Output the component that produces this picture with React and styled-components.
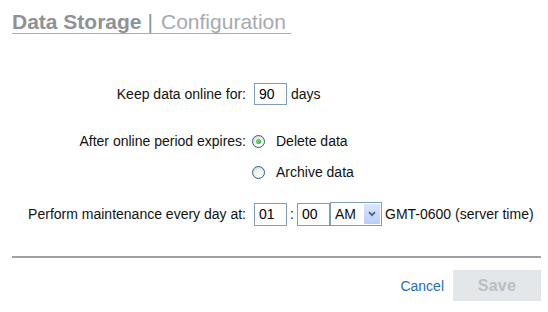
import React from 'react';
import styled, { createGlobalStyle } from 'styled-components';

const GlobalStyle = createGlobalStyle`
  html, body {
    margin: 0;
    padding: 0;
    background: #fff;
  }
  body {
    font-family: "Liberation Sans", Arial, sans-serif;
    font-size: 14px;
    color: #111;
  }
`;

const Page = styled.div`
  width: 548px;
  height: 312px;
  overflow: hidden;
`;

const Header = styled.div`
  padding: 11px 0 0 12px;
`;

const Title = styled.h1`
  display: inline-block;
  margin: 0;
  font-size: 21px;
  line-height: 22px;
  font-weight: normal;
  color: #a6aaae;
  border-bottom: 1px solid #a9adb1;
  padding-right: 5px;
`;

const TitleStrong = styled.span`
  font-weight: bold;
  color: #8d9296;
`;

const Sep = styled.span`
  color: #8d9296;
  margin: 0 8px 0 6px;
`;

const Form = styled.div`
  margin-top: 49px;
  display: flex;
  flex-direction: column;
`;

const Row = styled.div`
  display: grid;
  grid-template-columns: 246px 1fr;
  column-gap: 8px;
  align-items: start;
  margin-top: ${({ $mt }) => $mt || 0}px;
`;

const Label = styled.div`
  text-align: right;
  white-space: nowrap;
  line-height: ${({ $h }) => $h || 22}px;
`;

const Controls = styled.div`
  display: flex;
  align-items: center;
  height: ${({ $h }) => $h || 22}px;
  white-space: nowrap;
`;

const TextBox = styled.input`
  box-sizing: border-box;
  width: ${({ $w }) => $w || 33}px;
  height: ${({ $h }) => $h || 22}px;
  margin: 0;
  padding: 0 0 0 4px;
  border: 1px solid #7f9db9;
  border-radius: 0;
  font: 14px "Liberation Sans", Arial, sans-serif;
  color: #000;
  outline: none;
`;

const Unit = styled.span`
  margin-left: ${({ $ml }) => $ml || 4}px;
`;

const Colon = styled.span`
  width: 10px;
  text-align: center;
`;

const RadioGroup = styled.div`
  display: flex;
  flex-direction: column;
  gap: 9px;
`;

const RadioOption = styled.label`
  display: flex;
  align-items: center;
  height: 22px;
  gap: 11px;
  cursor: pointer;
`;

const RadioDot = styled.span`
  box-sizing: border-box;
  width: 13px;
  height: 13px;
  margin-left: -2px;
  border-radius: 50%;
  border: 1px solid #2d5d8c;
  background: radial-gradient(circle at 65% 70%, #ffffff 0%, #f2f2ee 40%, #d6d6ce 100%);
  display: flex;
  align-items: center;
  justify-content: center;

  &::after {
    content: '';
    width: 5px;
    height: 5px;
    border-radius: 50%;
    background: ${({ $on }) => ($on ? 'radial-gradient(circle at 35% 35%, #7fdc7f, #21a121)' : 'transparent')};
  }
`;

const Select = styled.div`
  box-sizing: border-box;
  width: 52px;
  height: 24px;
  padding: 1px;
  border: 1px solid #7f9db9;
  background: #fff;
  display: flex;
  align-items: stretch;
  justify-content: space-between;
`;

const SelectValue = styled.span`
  padding-left: 3px;
  line-height: 20px;
`;

const SelectArrow = styled.span`
  width: 16px;
  border-radius: 1px;
  background: linear-gradient(#dbe6fe, #b9cdf8);
  display: flex;
  align-items: center;
  justify-content: center;
`;

const Divider = styled.hr`
  margin: 30px 7px 0 12px;
  border: 0;
  height: 2px;
  background: #9da1a5;
`;

const Footer = styled.div`
  display: flex;
  justify-content: flex-end;
  align-items: center;
  gap: 9px;
  padding: 12px 7px 0 0;
`;

const LinkButton = styled.a`
  color: #1f6db8;
  font-size: 14px;
  text-decoration: none;
  cursor: pointer;
`;

const SaveButton = styled.button`
  width: 88px;
  height: 31px;
  border: 0;
  background: #e3e7ea;
  color: #babec2;
  font: bold 16px "Liberation Sans", Arial, sans-serif;
  letter-spacing: 0.3px;
`;

function Chevron() {
  return (
    <svg width="8" height="6" viewBox="0 0 8 6">
      <path d="M1 1.2 L4 4.2 L7 1.2" fill="none" stroke="#4d6185" strokeWidth="1.8" />
    </svg>
  );
}

export default function App() {
  return (
    <Page>
      <GlobalStyle />
      <Header>
        <Title>
          <TitleStrong>Data Storage</TitleStrong>
          <Sep>|</Sep>
          Configuration
        </Title>
      </Header>

      <Form>
        <Row>
          <Label>Keep data online for:</Label>
          <Controls>
            <TextBox $w={33} defaultValue="90" />
            <Unit>days</Unit>
          </Controls>
        </Row>

        <Row $mt={25}>
          <Label>After online period expires:</Label>
          <RadioGroup>
            <RadioOption>
              <RadioDot $on />
              Delete data
            </RadioOption>
            <RadioOption>
              <RadioDot />
              Archive data
            </RadioOption>
          </RadioGroup>
        </Row>

        <Row $mt={19}>
          <Label $h={24}>Perform maintenance every day at:</Label>
          <Controls $h={24}>
            <TextBox $w={33} $h={23} defaultValue="01" />
            <Colon>:</Colon>
            <TextBox $w={33} $h={23} defaultValue="00" />
            <Select>
              <SelectValue>AM</SelectValue>
              <SelectArrow>
                <Chevron />
              </SelectArrow>
            </Select>
            <Unit $ml={3}>GMT-0600 (server time)</Unit>
          </Controls>
        </Row>
      </Form>

      <Divider />
      <Footer>
        <LinkButton>Cancel</LinkButton>
        <SaveButton disabled>Save</SaveButton>
      </Footer>
    </Page>
  );
}
